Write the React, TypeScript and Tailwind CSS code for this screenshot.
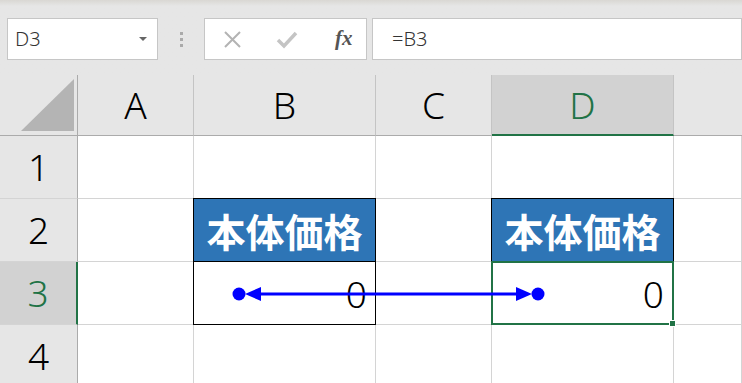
import React from "react";

const COLS = ["A", "B", "C", "D"];
const GRID = "grid grid-cols-[78px_116px_182px_116px_182px_1fr]";
const SANS = "font-['Noto_Sans','Noto_Sans_CJK_JP',sans-serif] font-light";

function Toolbar() {
  return (
    <div className="h-[75px] bg-gradient-to-b from-[#d9d7d3] via-[#e6e6e6] via-[8%] to-[#e6e6e6] pt-[18px]">
      <div className="flex h-[42px] items-stretch">
        <div className="ml-[7px] flex w-[151px] items-center justify-between border border-[#c6c6c6] bg-white pl-[7px] pr-[10px]">
          <span className={`${SANS} text-[20px] text-[#333]`}>D3</span>
          <span className="border-x-[4px] border-t-[4px] border-x-transparent border-t-[#666]" />
        </div>
        <div className="flex w-[46px] items-center justify-center">
          <div className="flex flex-col gap-[3px]">
            <span className="h-[3px] w-[3px] bg-[#aaa]" />
            <span className="h-[3px] w-[3px] bg-[#aaa]" />
            <span className="h-[3px] w-[3px] bg-[#aaa]" />
          </div>
        </div>
        <div className="flex w-[163px] items-center border border-[#c6c6c6] bg-white">
          <svg width="163" height="40" viewBox="0 0 163 40">
            <path d="M20 13 L35 28 M35 13 L20 28" stroke="#b3b3b3" strokeWidth="2" fill="none" />
            <path d="M73 21 L79 27 L91 14" stroke="#c4c4c4" strokeWidth="3.5" fill="none" />
          </svg>
          <span className="-ml-[33px] font-['Liberation_Serif',serif] text-[21px] font-bold italic text-[#555]">
            fx
          </span>
        </div>
        <div className="ml-[5px] flex flex-1 items-center border border-[#c6c6c6] bg-white pl-[19px]">
          <span className={`${SANS} text-[20px] text-[#333]`}>=B3</span>
        </div>
      </div>
    </div>
  );
}

function Header() {
  return (
    <div className={`${GRID} h-[61px] bg-[#e6e6e6]`}>
      <div className="relative border-b border-r border-[#ababab]">
        <div className="absolute bottom-[4px] right-[3px] h-0 w-0 border-b-[52px] border-l-[53px] border-b-[#b4b4b4] border-l-transparent" />
      </div>
      {COLS.map((c) => {
        const sel = c === "D";
        return (
          <div
            key={c}
            className={`flex items-center justify-center border-r border-[#c4c4c4] ${SANS} text-[37px] ${
              sel ? "border-b-2 border-b-[#217346] bg-[#d2d2d2] text-[#217346]" : "border-b border-b-[#ababab] text-black"
            }`}
          >
            {c}
          </div>
        );
      })}
      <div className="border-b border-[#ababab]" />
    </div>
  );
}

function Cell({ kind, value }: { kind?: "head" | "box" | "sel"; value?: string }) {
  if (kind === "head") {
    return (
      <div className="-ml-px -mt-px flex items-center justify-center border border-black bg-[#2e75b6]">
        <span className="font-['Noto_Sans_CJK_JP',sans-serif] text-[39px] font-bold leading-none text-white">本体価格</span>
      </div>
    );
  }
  if (kind === "box" || kind === "sel") {
    return (
      <div
        className={`relative -ml-px -mt-px flex items-center justify-end pr-[8px] ${
          kind === "sel" ? "border-2 border-[#217346]" : "border border-black"
        } bg-white`}
      >
        <span className={`${SANS} text-[37px] leading-none`}>{value}</span>
        {kind === "sel" && (
          <span className="absolute -bottom-[4px] -right-[4px] h-[7px] w-[7px] border border-white bg-[#217346]" />
        )}
      </div>
    );
  }
  return <div className="border-b border-r border-[#d4d4d4] bg-white" />;
}

function Row({ n, cells, sel }: { n: number; cells: React.ReactNode; sel?: boolean }) {
  return (
    <div className={`${GRID} h-[63px]`}>
      <div
        className={`flex items-center justify-center border-b ${SANS} text-[37px] ${
          sel
            ? "border-r-2 border-b-[#d4d4d4] border-r-[#217346] bg-[#d2d2d2] text-[#217346]"
            : "border-r border-b-[#d4d4d4] border-r-[#ababab] bg-[#e6e6e6] text-black"
        }`}
      >
        {n}
      </div>
      {cells}
    </div>
  );
}

export default function App() {
  return (
    <div className="relative h-[383px] w-[742px] overflow-hidden bg-white">
      <Toolbar />
      <Header />
      <Row n={1} cells={<><Cell /><Cell /><Cell /><Cell /><Cell /></>} />
      <Row n={2} cells={<><Cell /><Cell kind="head" /><Cell /><Cell kind="head" /><Cell /></>} />
      <Row n={3} sel cells={<><Cell /><Cell kind="box" value="0" /><Cell /><Cell kind="sel" value="0" /><Cell /></>} />
      <Row n={4} cells={<><Cell /><Cell /><Cell /><Cell /><Cell /></>} />
      <svg className="absolute left-0 top-0" width="742" height="383" viewBox="0 0 742 383">
        <line x1="258" y1="294" x2="519" y2="294" stroke="#0000ff" strokeWidth="3" />
        <circle cx="239" cy="294" r="6.5" fill="#0000ff" />
        <polygon points="245,294 261,287 261,301" fill="#0000ff" />
        <polygon points="532,294 516,287 516,301" fill="#0000ff" />
        <circle cx="538" cy="294" r="6.5" fill="#0000ff" />
      </svg>
    </div>
  );
}
